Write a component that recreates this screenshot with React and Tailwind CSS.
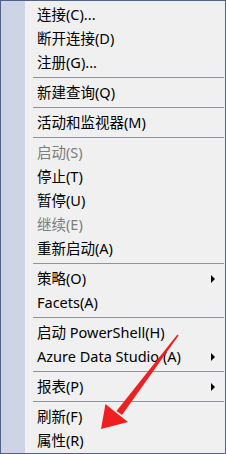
import React from 'react';

// context menu rows: sep = separator, off = disabled, sub = has submenu arrow
var ROWS = [
  { label: '连接(C)...' },
  { label: '断开连接(D)' },
  { label: '注册(G)...' },
  { sep: true },
  { label: '新建查询(Q)' },
  { sep: true },
  { label: '活动和监视器(M)' },
  { sep: true },
  { label: '启动(S)', off: true },
  { label: '停止(T)' },
  { label: '暂停(U)' },
  { label: '继续(E)', off: true },
  { label: '重新启动(A)' },
  { sep: true },
  { label: '策略(O)', sub: true },
  { label: 'Facets(A)' },
  { sep: true },
  { label: '启动 PowerShell(H)' },
  { label: 'Azure Data Studio (A)', sub: true },
  { sep: true },
  { label: '报表(P)', sub: true },
  { sep: true },
  { label: '刷新(F)' },
  { label: '属性(R)' },
];

function SubArrow() {
  return (
    <svg width="4" height="8" viewBox="0 0 4 8" className="shrink-0">
      <path d="M0 0 L4 4 L0 8 Z" fill="#000" />
    </svg>
  );
}

function RedArrow() {
  return (
    <svg width="226" height="454" viewBox="0 0 226 454"
      className="absolute left-0 top-0 pointer-events-none">
      <polygon fill="#ee1f1f"
        points="177.6,334.4 176.4,333.6 115.5,410 121,414" />
      <polygon fill="#ee1f1f"
        points="100,428 104.5,403 113,410 127,421" />
    </svg>
  );
}

export default function App() {
  return (
    <div className="relative w-[226px] h-[454px] flex border border-[#4f6185] bg-[#f0f0f0] overflow-hidden"
      style={{ fontFamily: '"Noto Sans", "Noto Sans CJK SC", sans-serif' }}>
      {/* icon gutter */}
      <div className="w-[24px] shrink-0 bg-[#cdd4e5]" />

      <div className="flex-1 flex flex-col pt-[2px]">
        {ROWS.map(function(r, i) {
          if (r.sep) {
            return (
              <div key={i} className="h-[6px] pt-[2px] shrink-0">
                <div className="ml-[8px] mr-[1px] h-px bg-[#8f949b]" />
              </div>
            );
          }
          return (
            <div key={i}
              className={`h-6 shrink-0 flex items-center justify-between pl-[12px] pr-[10px] pb-[1px] text-[14.5px] leading-none
                ${r.off ? 'text-[#7d7d7d]' : 'text-black'}`}>
              <span className="whitespace-nowrap">{r.label}</span>
              {r.sub && <SubArrow />}
            </div>
          );
        })}
      </div>

      <RedArrow />
    </div>
  );
}
